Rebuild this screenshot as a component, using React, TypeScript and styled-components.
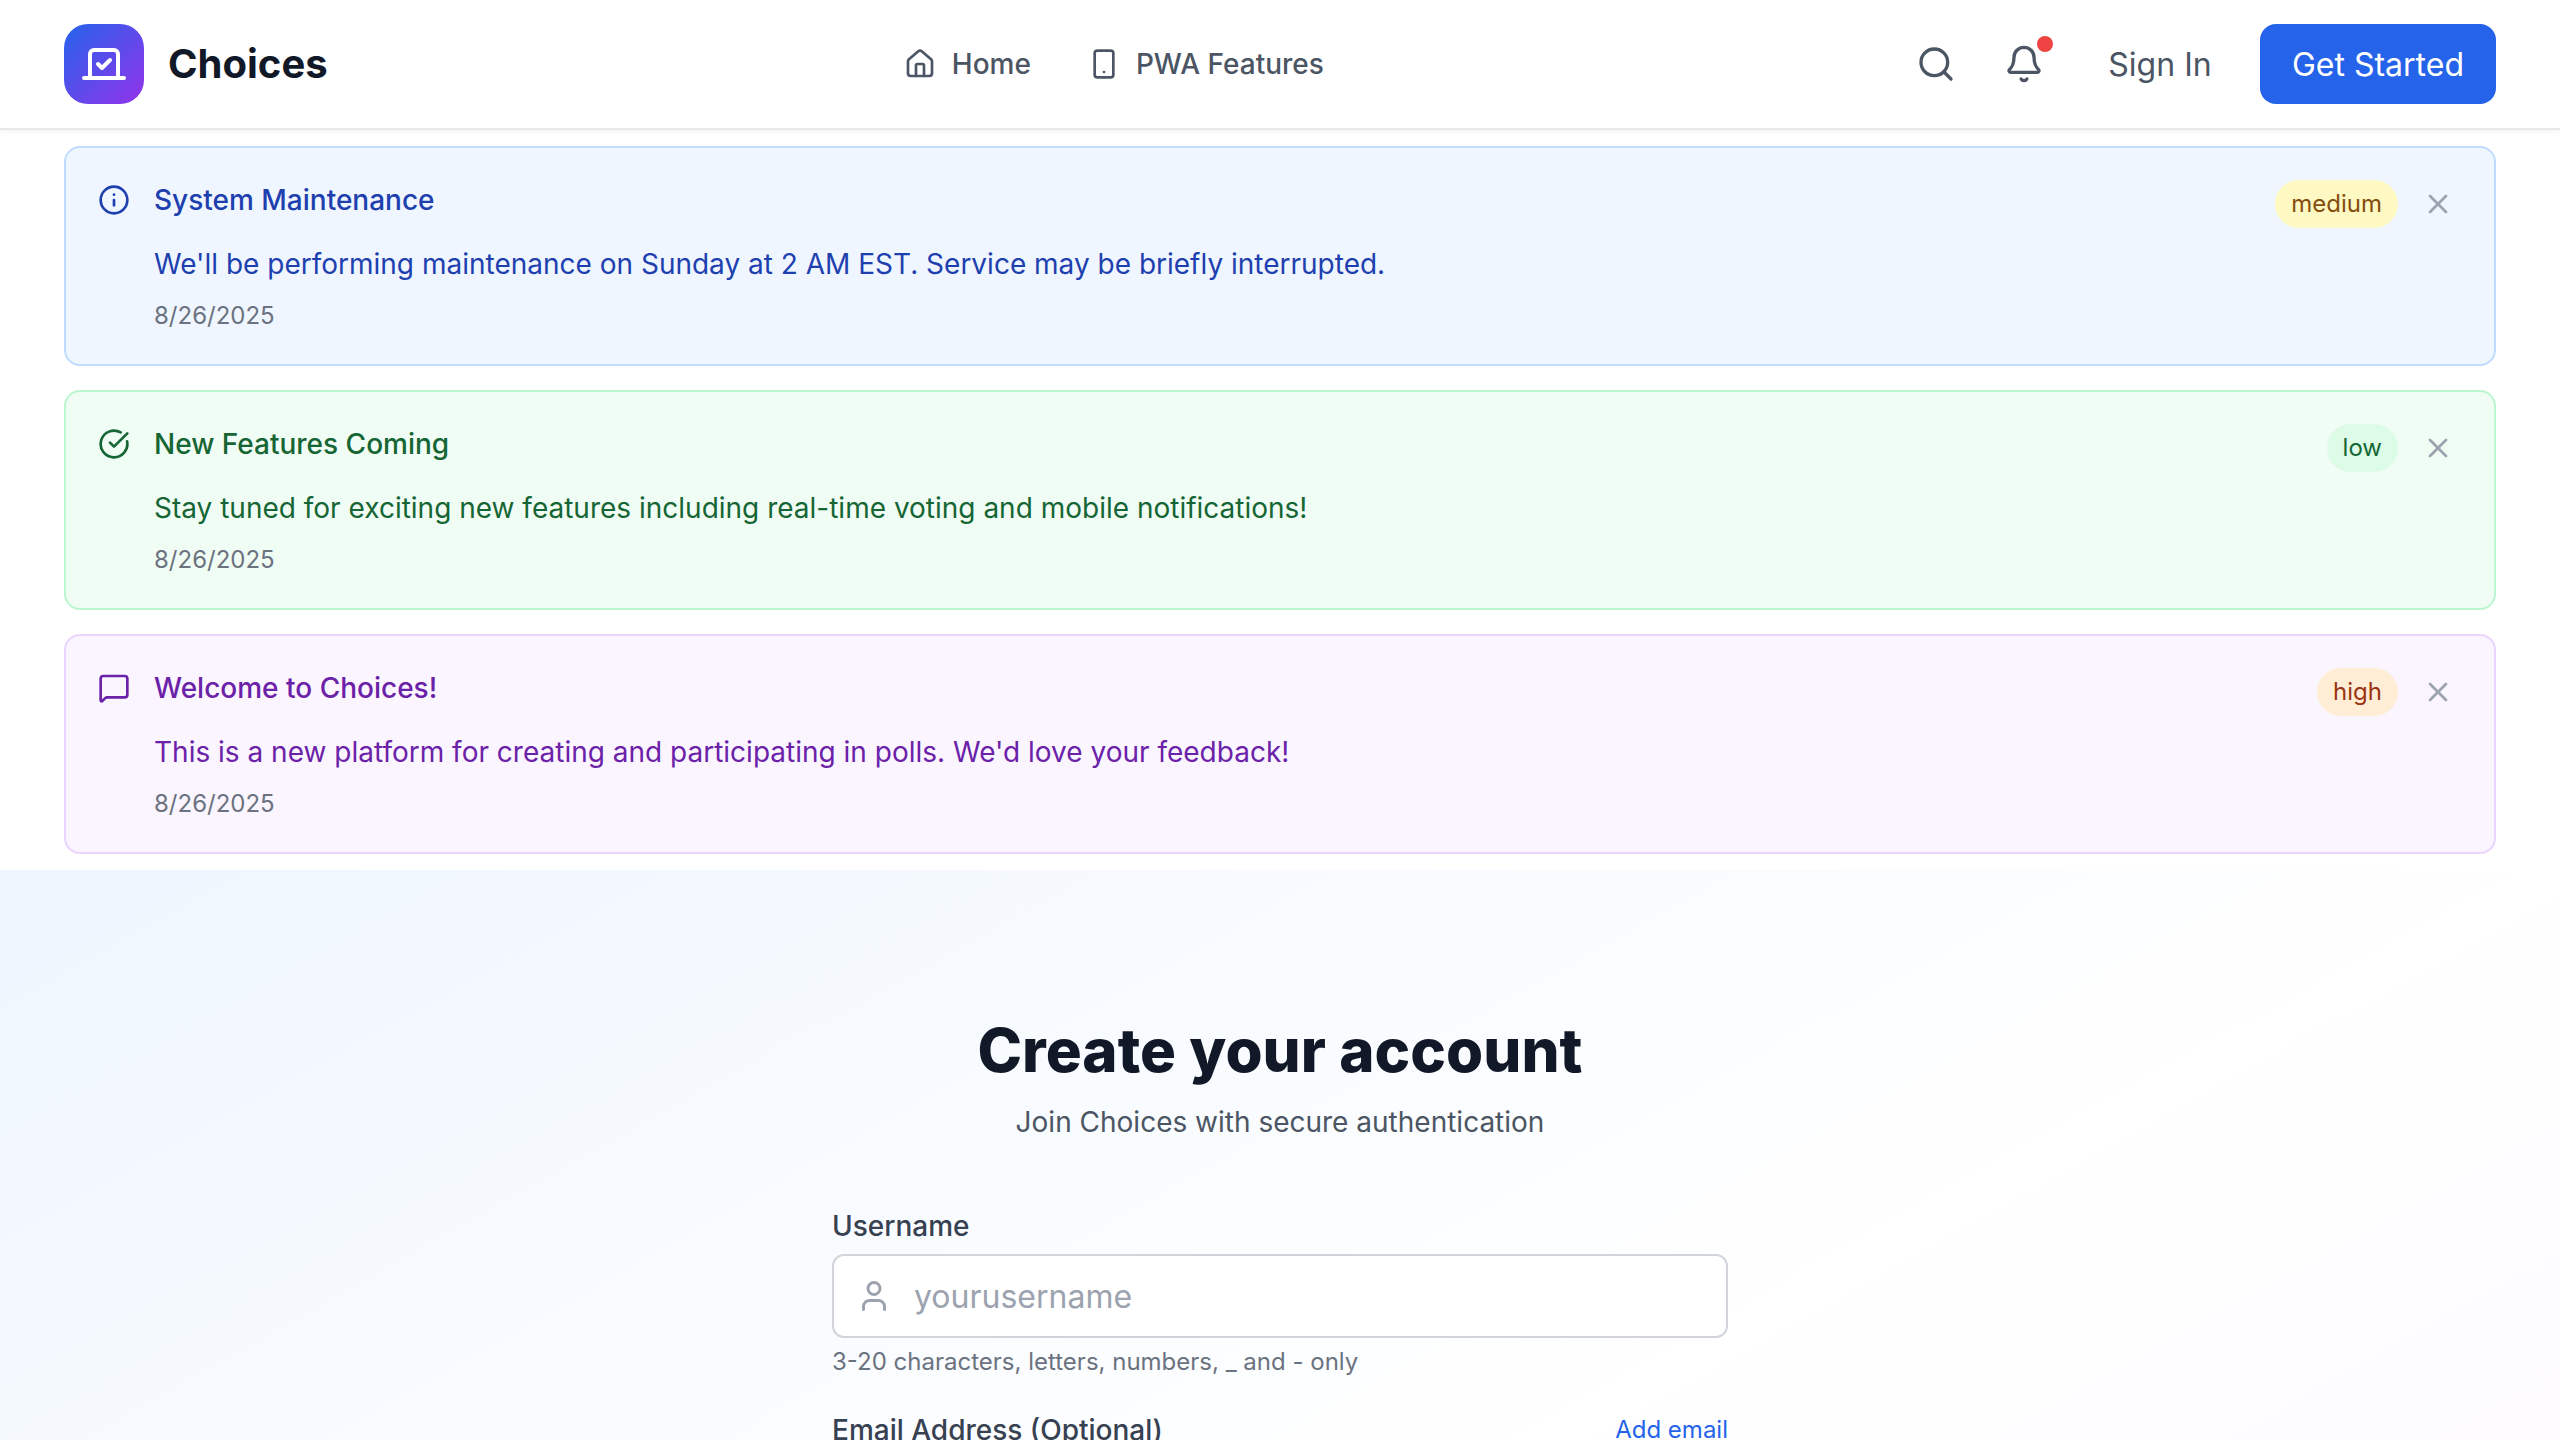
import React from 'react';
import styled, { createGlobalStyle } from 'styled-components';
import { Bell, CircleCheckBig, House, Info, MessageSquare, Search, Smartphone, User, Vote, X } from 'lucide-react';

const GlobalStyle = createGlobalStyle`
  *, *::before, *::after { box-sizing: border-box; }
  html, body { margin: 0; height: 100%; overflow: hidden; }
  body {
    background: #ffffff;
    color: #111827;
    font-family: Inter, "Liberation Sans", sans-serif;
    font-size: 32px;
    line-height: 48px;
    -webkit-font-smoothing: antialiased;
  }
  h1, h2, h3, p { margin: 0; }
  button { border: 0; background: none; font: inherit; color: inherit; cursor: pointer; padding: 0; }
  a { color: inherit; text-decoration: none; }
  svg { display: block; flex-shrink: 0; }
`;

const Page = styled.div`
  height: 1440px;
  overflow: hidden;
  display: flex;
  flex-direction: column;
`;

const Header = styled.header`
  height: 130px;
  flex-shrink: 0;
  display: flex;
  align-items: center;
  justify-content: space-between;
  padding: 0 64px;
  background: #ffffff;
  border-bottom: 2px solid #e5e7eb;
  box-shadow: 0 2px 4px rgba(0, 0, 0, 0.05);
`;

const Brand = styled.a`
  display: flex;
  align-items: center;
  gap: 24px;
`;

const LogoTile = styled.span`
  width: 80px;
  height: 80px;
  display: grid;
  place-items: center;
  border-radius: 24px;
  color: #ffffff;
  background: linear-gradient(to bottom right, #2563eb, #9333ea);
`;

const BrandName = styled.span`
  font-size: 40px;
  line-height: 56px;
  font-weight: 700;
`;

const Nav = styled.nav`
  display: flex;
  align-items: center;
  gap: 57px;
`;

const NavLink = styled.a`
  display: flex;
  align-items: center;
  gap: 16px;
  font-size: 28px;
  line-height: 40px;
  font-weight: 500;
  color: #4b5563;
`;

const Actions = styled.div`
  display: flex;
  align-items: center;
  gap: 16px;
  color: #4b5563;
`;

const IconButton = styled.button`
  position: relative;
  padding: 16px;
`;

const UnreadDot = styled.span`
  position: absolute;
  top: 8px;
  right: 7px;
  width: 16px;
  height: 16px;
  border-radius: 50%;
  background: #ef4444;
`;

const SignIn = styled.a`
  width: 168px;
  padding: 17px 0 15px;
  text-align: center;
`;

const GetStarted = styled.a`
  width: 236px;
  padding: 17px 0 15px;
  text-align: center;
  border-radius: 16px;
  color: #ffffff;
  background: #2563eb;
`;

const Notices = styled.section`
  flex-shrink: 0;
  display: flex;
  flex-direction: column;
  gap: 24px;
  padding: 16px 64px;
`;

type Tone = 'blue' | 'green' | 'purple';
type Level = 'low' | 'medium' | 'high';

const tones: Record<Tone, { bg: string; border: string; text: string }> = {
  blue: { bg: '#eff6ff', border: '#bfdbfe', text: '#1e40af' },
  green: { bg: '#f0fdf4', border: '#bbf7d0', text: '#166534' },
  purple: { bg: '#faf5ff', border: '#e9d5ff', text: '#6b21a8' },
};

const levels: Record<Level, { bg: string; text: string }> = {
  low: { bg: '#dcfce7', text: '#166534' },
  medium: { bg: '#fef9c3', text: '#854d0e' },
  high: { bg: '#ffedd5', text: '#9a3412' },
};

const NoticeCard = styled.article<{ $tone: Tone }>`
  display: flex;
  align-items: flex-start;
  gap: 24px;
  padding: 32px;
  border: 2px solid ${(p) => tones[p.$tone].border};
  border-radius: 16px;
  background: ${(p) => tones[p.$tone].bg};
  color: ${(p) => tones[p.$tone].text};
`;

const NoticeIcon = styled.span`
  margin-top: 4px;
`;

const NoticeBody = styled.div`
  flex: 1;
  min-width: 0;
`;

const NoticeHead = styled.div`
  display: flex;
  align-items: flex-start;
  justify-content: space-between;
`;

const NoticeTitle = styled.h3`
  font-size: 28px;
  line-height: 40px;
  font-weight: 500;
`;

const NoticeTools = styled.div`
  display: flex;
  align-items: center;
  gap: 16px;
`;

const LevelBadge = styled.span<{ $level: Level }>`
  padding: 8px 16px;
  border-radius: 24px;
  font-size: 24px;
  line-height: 32px;
  background: ${(p) => levels[p.$level].bg};
  color: ${(p) => levels[p.$level].text};
`;

const DismissButton = styled.button`
  padding: 8px;
  color: #9ca3af;
`;

const NoticeText = styled.p`
  margin-top: 16px;
  font-size: 28px;
  line-height: 40px;
`;

const NoticeDate = styled.p`
  margin-top: 16px;
  font-size: 24px;
  line-height: 32px;
  color: #6b7280;
`;

const Register = styled.main`
  min-height: 1440px;
  padding-top: 144px;
  display: flex;
  flex-direction: column;
  align-items: center;
  background: linear-gradient(to bottom right, #eff6ff, #ffffff, #faf5ff);
`;

const Heading = styled.h2`
  font-size: 60px;
  line-height: 72px;
  font-weight: 800;
  letter-spacing: 0.05px;
`;

const Subheading = styled.p`
  margin-top: 16px;
  font-size: 28px;
  line-height: 40px;
  color: #4b5563;
`;

const Form = styled.form`
  width: 896px;
  margin-top: 64px;
  display: flex;
  flex-direction: column;
  gap: 32px;
`;

const Field = styled.div`
  display: flex;
  flex-direction: column;
  gap: 8px;
`;

const Label = styled.label`
  font-size: 28px;
  line-height: 40px;
  font-weight: 500;
  color: #374151;
`;

const InputBox = styled.div`
  height: 84px;
  display: flex;
  align-items: center;
  gap: 22px;
  padding-left: 22px;
  border: 2px solid #d1d5db;
  border-radius: 12px;
  background: #ffffff;
  color: #9ca3af;
`;

const Input = styled.input`
  flex: 1;
  min-width: 0;
  padding: 2px 0 0;
  border: 0;
  outline: 0;
  background: transparent;
  font: inherit;
  color: #111827;
  &::placeholder { color: #9ca3af; opacity: 1; }
`;

const Hint = styled.p`
  font-size: 24px;
  line-height: 32px;
  color: #6b7280;
`;

const LabelRow = styled.div`
  display: flex;
  align-items: center;
  justify-content: space-between;
`;

const TextButton = styled.button`
  font-size: 24px;
  line-height: 32px;
  color: #2563eb;
`;

const notices: { tone: Tone; level: Level; title: string; text: string; date: string; icon: React.ReactNode }[] = [
  {
    tone: 'blue',
    level: 'medium',
    title: 'System Maintenance',
    text: "We'll be performing maintenance on Sunday at 2 AM EST. Service may be briefly interrupted.",
    date: '8/26/2025',
    icon: <Info size={32} />,
  },
  {
    tone: 'green',
    level: 'low',
    title: 'New Features Coming',
    text: 'Stay tuned for exciting new features including real-time voting and mobile notifications!',
    date: '8/26/2025',
    icon: <CircleCheckBig size={32} />,
  },
  {
    tone: 'purple',
    level: 'high',
    title: 'Welcome to Choices!',
    text: "This is a new platform for creating and participating in polls. We'd love your feedback!",
    date: '8/26/2025',
    icon: <MessageSquare size={32} />,
  },
];

export default function App() {
  return (
    <>
      <GlobalStyle />
      <Page>
        <Header>
          <Brand href="#">
            <LogoTile><Vote size={48} /></LogoTile>
            <BrandName>Choices</BrandName>
          </Brand>
          <Nav>
            <NavLink href="#"><House size={32} />Home</NavLink>
            <NavLink href="#"><Smartphone size={32} />PWA Features</NavLink>
          </Nav>
          <Actions>
            <IconButton aria-label="Search"><Search size={40} /></IconButton>
            <IconButton aria-label="Notifications"><Bell size={40} /><UnreadDot /></IconButton>
            <SignIn href="#">Sign In</SignIn>
            <GetStarted href="#">Get Started</GetStarted>
          </Actions>
        </Header>
        <Notices>
          {notices.map((n) => (
            <NoticeCard key={n.title} $tone={n.tone}>
              <NoticeIcon>{n.icon}</NoticeIcon>
              <NoticeBody>
                <NoticeHead>
                  <NoticeTitle>{n.title}</NoticeTitle>
                  <NoticeTools>
                    <LevelBadge $level={n.level}>{n.level}</LevelBadge>
                    <DismissButton aria-label="Dismiss"><X size={32} /></DismissButton>
                  </NoticeTools>
                </NoticeHead>
                <NoticeText>{n.text}</NoticeText>
                <NoticeDate>{n.date}</NoticeDate>
              </NoticeBody>
            </NoticeCard>
          ))}
        </Notices>
        <Register>
          <Heading>Create your account</Heading>
          <Subheading>Join Choices with secure authentication</Subheading>
          <Form>
            <Field>
              <Label htmlFor="username">Username</Label>
              <InputBox>
                <User size={36} />
                <Input id="username" placeholder="yourusername" />
              </InputBox>
              <Hint>3-20 characters, letters, numbers, _ and - only</Hint>
            </Field>
            <LabelRow>
              <Label>Email Address (Optional)</Label>
              <TextButton type="button">Add email</TextButton>
            </LabelRow>
          </Form>
        </Register>
      </Page>
    </>
  );
}
